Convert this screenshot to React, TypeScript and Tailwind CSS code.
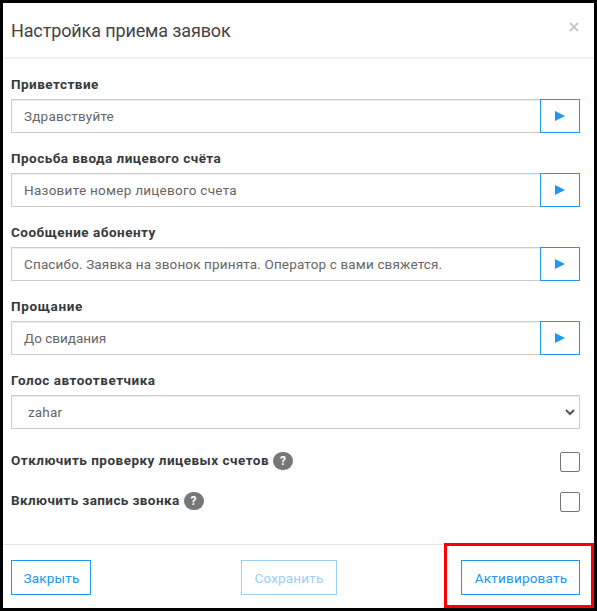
import React from "react";

type FieldProps = {
  label: string;
  value: string;
  labelClass: string;
  valueClass: string;
};

function Label({ children, className }: { children: string; className: string }) {
  return (
    <span className={`block whitespace-nowrap text-[13.5px] leading-5 font-bold text-[#373a3c] ${className}`}>
      {children}
    </span>
  );
}

function Field({ label, value, labelClass, valueClass }: FieldProps) {
  return (
    <div className="mb-[15px]">
      <Label className={`mb-[5px] ${labelClass}`}>{label}</Label>
      <div className="flex h-[34px]">
        <div className="flex flex-1 items-center border border-r-0 border-[#ccc] pl-3 text-[13.5px] text-[#666] shadow-[inset_0_1px_1px_rgba(0,0,0,0.075)]">
          <span className={`whitespace-nowrap ${valueClass}`}>{value}</span>
        </div>
        <button className="flex w-10 items-center justify-center border border-[#2196f3]" aria-label="Play">
          <svg width="10" height="10" viewBox="0 0 10 10" fill="#2196f3">
            <path d="M0 0L10 5L0 10Z" />
          </svg>
        </button>
      </div>
    </div>
  );
}

function CheckRow({ label, labelClass }: { label: string; labelClass: string }) {
  return (
    <div className="flex h-10 items-start justify-between">
      <div className="flex">
        <Label className={`-mt-0.5 ${labelClass}`}>{label}</Label>
        <span className="ml-1 flex h-[18px] w-5 items-center justify-center rounded-full bg-[#777] text-[12px] leading-none font-bold text-white">
          ?
        </span>
      </div>
      <span className="size-5 rounded-[2px] border border-[#767676]" />
    </div>
  );
}

export default function App() {
  return (
    <div className="relative flex h-[611px] w-[597px] flex-col border-[3px] border-black bg-white font-['Roboto','Noto_Sans',sans-serif]">
      <header className="flex h-[56px] shrink-0 items-center justify-between border-b-2 border-[#efefef] pr-[15px] pl-2">
        <h1 className="mt-px whitespace-nowrap text-[18px] leading-6 tracking-[-0.13px] text-[#444]">Настройка приема заявок</h1>
        <svg className="-mt-1.5" width="10" height="10" viewBox="0 0 10 10" stroke="#c8c8c8" strokeWidth="2">
          <path d="M1 1L9 9M9 1L1 9" />
        </svg>
      </header>
      <main className="h-[486px] shrink-0 border-b border-[#e5e5e5] pt-[15px] pr-[14px] pl-2">
        <Field label="Приветствие" value="Здравствуйте" labelClass="tracking-[0.48px]" valueClass="tracking-[0.22px]" />
        <Field label="Просьба ввода лицевого счёта" value="Назовите номер лицевого счета" labelClass="tracking-[0.46px]" valueClass="tracking-[0.27px]" />
        <Field label="Сообщение абоненту" value="Спасибо. Заявка на звонок принята. Оператор с вами свяжется." labelClass="tracking-[0.5px]" valueClass="tracking-[0.15px]" />
        <Field label="Прощание" value="До свидания" labelClass="tracking-[0.65px]" valueClass="tracking-[0px]" />
        <Label className="mb-[5px] tracking-[0.52px]">Голос автоответчика</Label>
        <div className="flex h-[34px] items-center justify-between border border-[#ccc] pr-1 pl-4 text-[13.5px] text-[#666] shadow-[inset_0_1px_1px_rgba(0,0,0,0.075)]">
          <span className="tracking-[0.15px]">zahar</span>
          <svg width="10" height="7" viewBox="0 0 10 7" fill="none" stroke="#555" strokeWidth="2">
            <path d="M1 1L5 5L9 1" />
          </svg>
        </div>
        <div className="mt-[23px]">
          <CheckRow label="Отключить проверку лицевых счетов" labelClass="tracking-[0.49px]" />
          <CheckRow label="Включить запись звонка" labelClass="tracking-[0.4px]" />
        </div>
      </main>
      <footer className="flex flex-1 items-start justify-between pt-[15px] pr-[14px] pl-2 text-[13.5px] text-[#2196f3]">
        <button className="h-[35px] w-20 border border-[#2196f3] pt-px pl-px tracking-[0.2px]">Закрыть</button>
        <button className="mr-[-26px] h-[35px] w-24 border border-[#2196f3] pt-px tracking-[0.2px] opacity-45">Сохранить</button>
        <button className="h-[35px] w-[119px] border border-[#2196f3] pt-px pl-px tracking-[0.2px]">Активировать</button>
      </footer>
      <div className="absolute top-[540px] left-[441px] h-[65px] w-[150px] border-[3px] border-[#ff0000]" />
    </div>
  );
}
